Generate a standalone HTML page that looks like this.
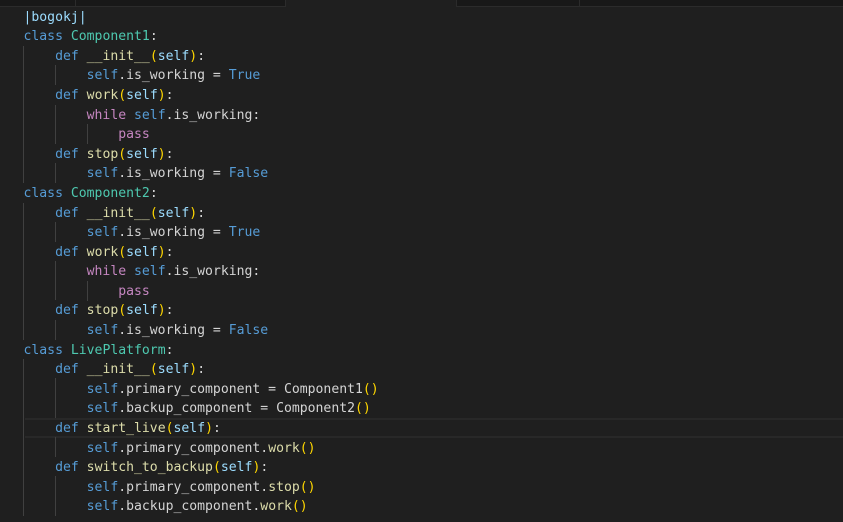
<!DOCTYPE html>
<html>
<head>
<meta charset="utf-8">
<style>
html,body{margin:0;padding:0;background:#1f1f1f;}
#r{position:relative;width:843px;height:522px;overflow:hidden;background:#1f1f1f;font-family:"DejaVu Sans Mono","Liberation Mono",monospace;font-size:13.12px;color:#d4d4d4;}
.b{position:absolute;}
.l{position:absolute;left:23.5px;height:20px;line-height:20px;white-space:pre;margin-top:1.5px}
.k{color:#569cd6}.c{color:#4ec9b0}.f{color:#dcdcaa}.p{color:#ffd700}.v{color:#9cdcfe}.m{color:#c586c0}.s{color:#569cd6}.t{color:#d4d4d4}
.g{position:absolute;width:1px;background:#404040;}
</style>
</head>
<body>
<div id="r">
<div class="b" style="left:0;top:0;width:843px;height:6px;background:#181818;border-bottom:1px solid #2b2b2b;box-sizing:content-box"></div>
<div class="b" style="left:75px;top:0;width:1px;height:6px;background:#2b2b2b"></div>
<div class="b" style="left:285px;top:0;width:172px;height:7px;background:#1f1f1f;border-left:1px solid #2b2b2b;border-right:1px solid #2b2b2b;box-sizing:border-box"></div>
<div class="b" style="left:579px;top:0;width:1px;height:7px;background:#2b2b2b"></div>
<div class="b" style="left:25px;top:418px;width:818px;height:2px;background:#282828"></div>
<div class="b" style="left:25px;top:436px;width:818px;height:2px;background:#282828"></div>

<div class="g" style="left:23px;top:46px;height:137px"></div>
<div class="g" style="left:23px;top:203px;height:137px"></div>
<div class="g" style="left:23px;top:359px;height:157px"></div>
<div class="g" style="left:55px;top:65px;height:20px"></div>
<div class="g" style="left:55px;top:105px;height:39px"></div>
<div class="g" style="left:55px;top:163px;height:20px"></div>
<div class="g" style="left:55px;top:222px;height:20px"></div>
<div class="g" style="left:55px;top:261px;height:39px"></div>
<div class="g" style="left:55px;top:320px;height:20px"></div>
<div class="g" style="left:55px;top:378px;height:40px"></div>
<div class="g" style="left:55px;top:437px;height:20px"></div>
<div class="g" style="left:55px;top:476px;height:40px"></div>
<div class="g" style="left:87px;top:124px;height:20px"></div>
<div class="g" style="left:87px;top:281px;height:20px"></div>

<div class="l" style="top:6.2px"><span class="v">|bogokj|</span></div>
<div class="l" style="top:25.8px"><span class="k">class</span> <span class="c">Component1</span><span class="t">:</span></div>
<div class="l" style="top:45.4px">    <span class="k">def</span> <span class="f">__init__</span><span class="p">(</span><span class="v">self</span><span class="p">)</span><span class="t">:</span></div>
<div class="l" style="top:64.9px">        <span class="s">self</span><span class="t">.is_working = </span><span class="k">True</span></div>
<div class="l" style="top:84.5px">    <span class="k">def</span> <span class="f">work</span><span class="p">(</span><span class="v">self</span><span class="p">)</span><span class="t">:</span></div>
<div class="l" style="top:104.1px">        <span class="m">while</span> <span class="s">self</span><span class="t">.is_working:</span></div>
<div class="l" style="top:123.7px">            <span class="m">pass</span></div>
<div class="l" style="top:143.3px">    <span class="k">def</span> <span class="f">stop</span><span class="p">(</span><span class="v">self</span><span class="p">)</span><span class="t">:</span></div>
<div class="l" style="top:162.8px">        <span class="s">self</span><span class="t">.is_working = </span><span class="k">False</span></div>
<div class="l" style="top:182.4px"><span class="k">class</span> <span class="c">Component2</span><span class="t">:</span></div>
<div class="l" style="top:202px">    <span class="k">def</span> <span class="f">__init__</span><span class="p">(</span><span class="v">self</span><span class="p">)</span><span class="t">:</span></div>
<div class="l" style="top:221.6px">        <span class="s">self</span><span class="t">.is_working = </span><span class="k">True</span></div>
<div class="l" style="top:241.2px">    <span class="k">def</span> <span class="f">work</span><span class="p">(</span><span class="v">self</span><span class="p">)</span><span class="t">:</span></div>
<div class="l" style="top:260.7px">        <span class="m">while</span> <span class="s">self</span><span class="t">.is_working:</span></div>
<div class="l" style="top:280.3px">            <span class="m">pass</span></div>
<div class="l" style="top:299.9px">    <span class="k">def</span> <span class="f">stop</span><span class="p">(</span><span class="v">self</span><span class="p">)</span><span class="t">:</span></div>
<div class="l" style="top:319.5px">        <span class="s">self</span><span class="t">.is_working = </span><span class="k">False</span></div>
<div class="l" style="top:339.1px"><span class="k">class</span> <span class="c">LivePlatform</span><span class="t">:</span></div>
<div class="l" style="top:358.6px">    <span class="k">def</span> <span class="f">__init__</span><span class="p">(</span><span class="v">self</span><span class="p">)</span><span class="t">:</span></div>
<div class="l" style="top:378.2px">        <span class="s">self</span><span class="t">.primary_component = Component1</span><span class="p">()</span></div>
<div class="l" style="top:397.8px">        <span class="s">self</span><span class="t">.backup_component = Component2</span><span class="p">()</span></div>
<div class="l" style="top:417.4px">    <span class="k">def</span> <span class="f">start_live</span><span class="p">(</span><span class="v">self</span><span class="p">)</span><span class="t">:</span></div>
<div class="l" style="top:437px">        <span class="s">self</span><span class="t">.primary_component.</span><span class="f">work</span><span class="p">()</span></div>
<div class="l" style="top:456.5px">    <span class="k">def</span> <span class="f">switch_to_backup</span><span class="p">(</span><span class="v">self</span><span class="p">)</span><span class="t">:</span></div>
<div class="l" style="top:476.1px">        <span class="s">self</span><span class="t">.primary_component.</span><span class="f">stop</span><span class="p">()</span></div>
<div class="l" style="top:495.7px">        <span class="s">self</span><span class="t">.backup_component.</span><span class="f">work</span><span class="p">()</span></div>
</div>
</body>
</html>
